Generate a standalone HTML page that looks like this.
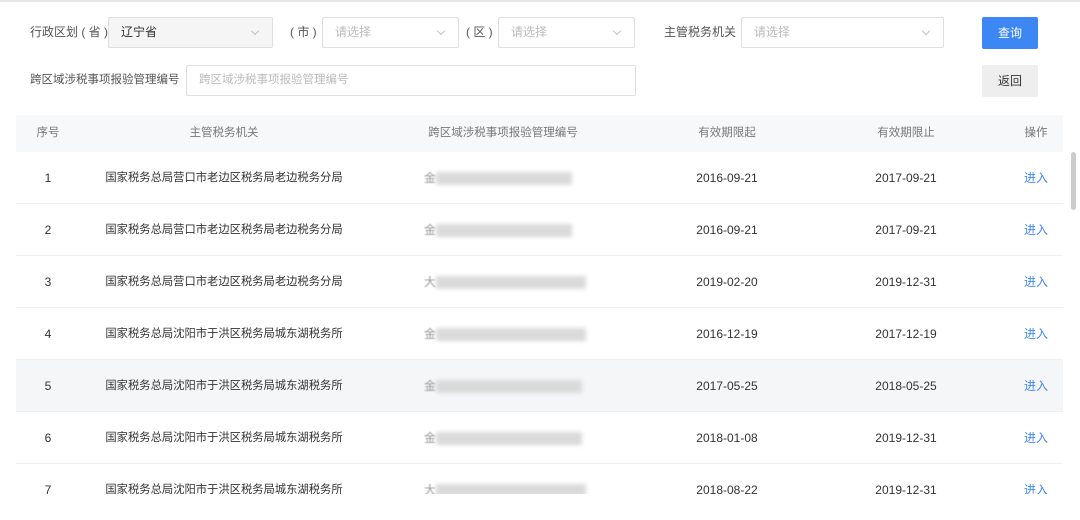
<!DOCTYPE html>
<html><head><meta charset="utf-8"><style>
body{margin:0;width:1080px;height:520px;overflow:hidden;background:#fff;font-family:"Liberation Sans","Noto Sans CJK SC",sans-serif;font-size:12px;color:#333;position:relative}
.a{position:absolute}
.sel{position:absolute;height:31px;border:1px solid #dcdfe6;border-radius:2px;box-sizing:border-box;line-height:29px;padding-left:12px;color:#bbb}
.sel.arr::after{content:"";position:absolute;right:14px;top:10px;width:5px;height:5px;border-right:1px solid #c0c4cc;border-bottom:1px solid #c0c4cc;transform:rotate(45deg)}
.lbl{position:absolute;line-height:31px;color:#555;white-space:pre}
.row{position:absolute;left:16px;width:1047px;height:52px;border-bottom:1px solid #eef0f3;box-sizing:border-box}
.c{position:absolute;top:0;line-height:52px;text-align:center;transform:translateX(-50%);white-space:nowrap}
.o{font-size:11.3px}
.blur{position:absolute;height:13px;top:20px;background:#dadada;filter:blur(2px)}
.lc{position:absolute;left:408px;top:0;line-height:52px;color:#999;filter:blur(0.6px)}
</style></head><body>
<div class="a" style="left:0;top:0;width:1080px;height:2px;background:#e8e8e8"></div>
<div class="lbl" style="left:30px;top:17px">行政区划 ( 省 )</div>
<div class="sel arr" style="left:108px;top:17px;width:165px;background:#f5f5f5;color:#333">辽宁省</div>
<div class="lbl" style="left:290px;top:17px">( 市 )</div>
<div class="sel arr" style="left:322px;top:17px;width:137px">请选择</div>
<div class="lbl" style="left:466px;top:17px">( 区 )</div>
<div class="sel arr" style="left:498px;top:17px;width:137px">请选择</div>
<div class="lbl" style="left:664px;top:17px">主管税务机关</div>
<div class="sel arr" style="left:741px;top:17px;width:203px">请选择</div>
<div class="a" style="left:982px;top:17px;width:56px;height:32px;background:#3d87f5;color:#fff;text-align:center;line-height:32px;border-radius:2px">查询</div>
<div class="lbl" style="left:30px;top:65px;font-size:11.5px">跨区域涉税事项报验管理编号</div>
<div class="sel" style="left:186px;top:65px;width:450px;font-size:11.5px">跨区域涉税事项报验管理编号</div>
<div class="a" style="left:982px;top:65px;width:56px;height:32px;background:#eeeeee;color:#333;text-align:center;line-height:32px;border-radius:2px">返回</div>
<div class="row" style="top:115px;height:37px;background:#f7f8fa;border:none;color:#777;font-size:11.5px">
<div class="c" style="left:32px;line-height:37px">序号</div>
<div class="c" style="left:208px;line-height:37px">主管税务机关</div>
<div class="c" style="left:487px;line-height:37px">跨区域涉税事项报验管理编号</div>
<div class="c" style="left:711px;line-height:37px">有效期限起</div>
<div class="c" style="left:890px;line-height:37px">有效期限止</div>
<div class="c" style="left:1020px;line-height:37px">操作</div>
</div>
<div class="a" style="left:1071px;top:152px;width:5px;height:58px;background:#ccc;border-radius:3px"></div>

<div class="row" style="top:152px"><div class="c" style="left:32px">1</div><div class="c o" style="left:208px">国家税务总局营口市老边区税务局老边税务分局</div><span class="lc">金</span><div class="blur" style="left:420px;width:136px"></div><div class="c" style="left:711px">2016-09-21</div><div class="c" style="left:890px">2017-09-21</div><div class="c" style="left:1020px;color:#3d87f5">进入</div></div>
<div class="row" style="top:204px"><div class="c" style="left:32px">2</div><div class="c o" style="left:208px">国家税务总局营口市老边区税务局老边税务分局</div><span class="lc">金</span><div class="blur" style="left:420px;width:136px"></div><div class="c" style="left:711px">2016-09-21</div><div class="c" style="left:890px">2017-09-21</div><div class="c" style="left:1020px;color:#3d87f5">进入</div></div>
<div class="row" style="top:256px"><div class="c" style="left:32px">3</div><div class="c o" style="left:208px">国家税务总局营口市老边区税务局老边税务分局</div><span class="lc">大</span><div class="blur" style="left:420px;width:150px"></div><div class="c" style="left:711px">2019-02-20</div><div class="c" style="left:890px">2019-12-31</div><div class="c" style="left:1020px;color:#3d87f5">进入</div></div>
<div class="row" style="top:308px"><div class="c" style="left:32px">4</div><div class="c o" style="left:208px">国家税务总局沈阳市于洪区税务局城东湖税务所</div><span class="lc">金</span><div class="blur" style="left:420px;width:150px"></div><div class="c" style="left:711px">2016-12-19</div><div class="c" style="left:890px">2017-12-19</div><div class="c" style="left:1020px;color:#3d87f5">进入</div></div>
<div class="row" style="top:360px;background:#f5f6f8"><div class="c" style="left:32px">5</div><div class="c o" style="left:208px">国家税务总局沈阳市于洪区税务局城东湖税务所</div><span class="lc">金</span><div class="blur" style="left:420px;width:146px"></div><div class="c" style="left:711px">2017-05-25</div><div class="c" style="left:890px">2018-05-25</div><div class="c" style="left:1020px;color:#3d87f5">进入</div></div>
<div class="row" style="top:412px"><div class="c" style="left:32px">6</div><div class="c o" style="left:208px">国家税务总局沈阳市于洪区税务局城东湖税务所</div><span class="lc">金</span><div class="blur" style="left:420px;width:146px"></div><div class="c" style="left:711px">2018-01-08</div><div class="c" style="left:890px">2019-12-31</div><div class="c" style="left:1020px;color:#3d87f5">进入</div></div>
<div class="row" style="top:464px"><div class="c" style="left:32px">7</div><div class="c o" style="left:208px">国家税务总局沈阳市于洪区税务局城东湖税务所</div><span class="lc">大</span><div class="blur" style="left:420px;width:150px"></div><div class="c" style="left:711px">2018-08-22</div><div class="c" style="left:890px">2019-12-31</div><div class="c" style="left:1020px;color:#3d87f5">进入</div></div>
<div class="a" style="left:0;top:494px;width:1080px;height:26px;background:#fff"></div>
</body></html>
